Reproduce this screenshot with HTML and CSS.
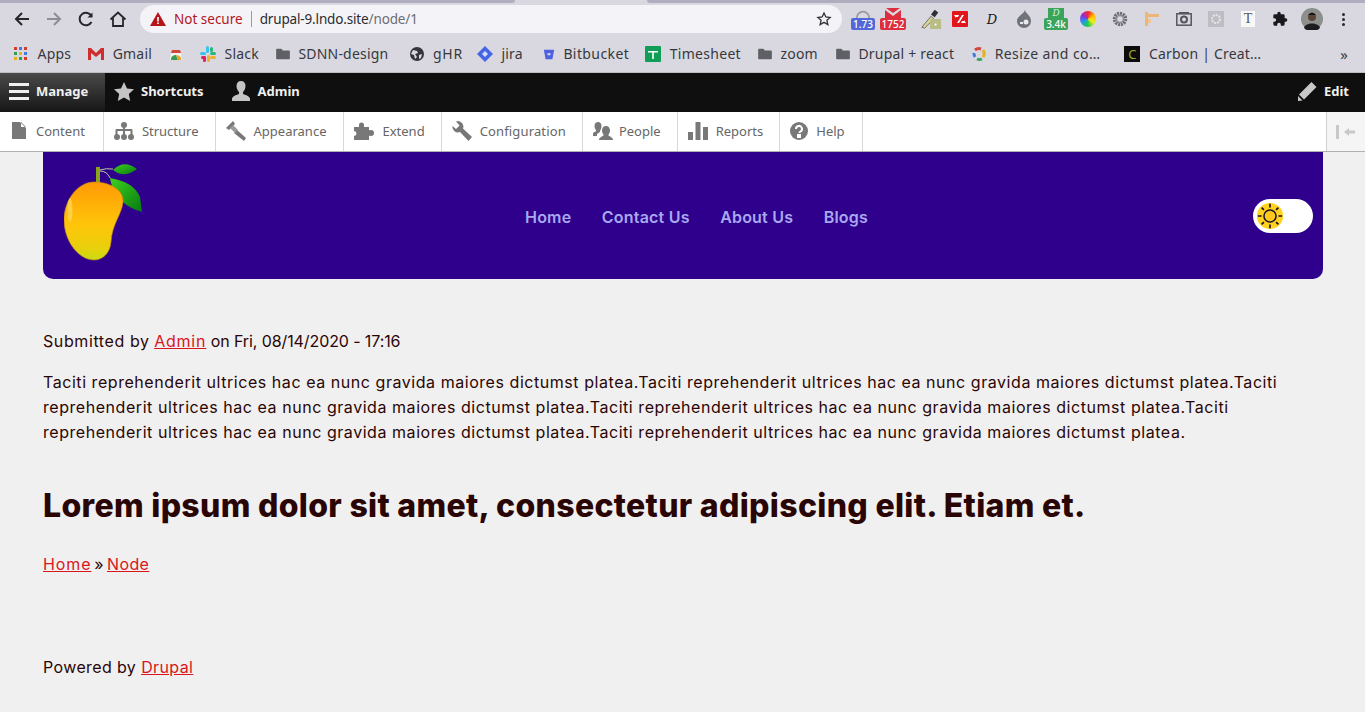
FILE: index.html
```html
<!DOCTYPE html>
<html lang="en">
<head>
    <meta charset="UTF-8">
    <meta name="viewport" content="width=device-width, initial-scale=1.0">
    <title>Drupal 9 node</title>
    <link rel="stylesheet" href="styles.css">
</head>
<body>
    <svg class="defs" width="0" height="0">
        <symbol id="folder" viewBox="0 0 16 14"><path d="M0 2q0-1 1-1h5l2 2h7q1 0 1 1v8q0 1-1 1H1q-1 0-1-1z"/></symbol>
    </svg>

    <div class="tabstrip">
        <span class="tab-edge tab-left"></span>
        <span class="tab-edge tab-right"></span>
    </div>

    <div class="toolbar">
        <div class="nav-icons">
            <svg width="18" height="18" viewBox="0 0 18 18" fill="none" stroke="#26272b" stroke-width="2"><path d="M16 9H3M9 3 3 9l6 6"/></svg>
            <svg width="18" height="18" viewBox="0 0 18 18" fill="none" stroke="#8d8e93" stroke-width="2"><path d="M2 9h13M9 3l6 6-6 6"/></svg>
            <svg width="18" height="18" viewBox="0 0 18 18" fill="none" stroke="#26272b" stroke-width="2"><path d="M14.5 12a6.3 6.3 0 1 1 .2-5.5"/><path d="M15.5 2.500v5h-5" fill="#26272b" stroke="none"/></svg>
            <svg width="18" height="18" viewBox="0 0 18 18" fill="none" stroke="#26272b" stroke-width="1.800"><path d="M1.500 9.500 9 2.500l7.500 7M4 8v8h10V8"/></svg>
        </div>
        <div class="omnibox">
            <svg class="warn" width="16" height="14" viewBox="0 0 16 14"><path d="M8 0 16 14H0z" fill="#b3151b"/><path d="M7.200 5h1.600v4.500H7.200zM7.200 10.500h1.600V12H7.200z" fill="#fff"/></svg>
            <span class="not-secure">Not secure</span>
            <span class="omni-sep"></span>
            <span class="url">drupal-9.lndo.site<span class="url-path">/node/1</span></span>
            <svg class="omni-star" width="16" height="16" viewBox="0 0 24 24" fill="none" stroke="#33343a" stroke-width="2"><path d="m12 3 2.800 6 6.400.7-4.800 4.300 1.400 6.400L12 17l-5.800 3.400L7.600 14 2.800 9.700 9.200 9z"/></svg>
        </div>
        <div class="extensions">
            <span class="ext ext-speed"><svg width="20" height="9" viewBox="0 0 20 10" fill="none" stroke="#9a9aa0" stroke-width="2"><path d="M3 10a7 7 0 0 1 14 0"/></svg><b class="badge badge-blue">1.73</b></span>
            <span class="ext ext-mail"><svg width="18" height="10" viewBox="0 0 18 10"><path d="M2 0h14L9 5z" fill="#dc2e3c"/><path d="M1 2l8 6 8-6v8H1z" fill="#dc2e3c"/></svg><b class="badge badge-red">1752</b></span>
            <svg class="ext-dropper" width="22" height="24" viewBox="0 0 24 24"><path d="M2 21 12 9l3 3L5 22z" fill="#d8d49a" stroke="#666" stroke-width="1"/><path d="m12 7 4-5 4 3-4 5z" fill="#2e2f33"/><rect x="11" y="12" width="12" height="11" rx="1" fill="#b8bd84"/><rect x="16" y="17" width="2" height="2" fill="#fff"/></svg>
            <svg class="ext-icon" width="16" height="16" viewBox="0 0 16 16"><rect width="16" height="16" rx="1" fill="#e2141c"/><path d="M2 4h5l-1 2H4v1zM14 12H9l1-2h2V9zM5 12 10 4h2l-5 8z" fill="#fff"/></svg>
            <span class="ext-d">D</span>
            <svg class="ext-icon" width="16" height="18" viewBox="0 0 16 18"><path d="M9 0c0 3 6 5 6 11a7 7 0 0 1-14 0C1 6 7 5 9 0z" fill="#70727a"/><circle cx="10" cy="12" r="2.500" fill="#e8e8ea"/><rect x="4" y="12" width="3" height="2" fill="#e8e8ea"/></svg>
            <span class="ext ext-green"><span class="green-top">D</span><b class="badge badge-green">3.4k</b></span>
            <span class="ext-wheel"></span>
            <svg class="ext-icon" width="16" height="16" viewBox="0 0 16 16"><circle cx="8" cy="8" r="5.500" fill="none" stroke="#6e6f74" stroke-width="3.500" stroke-dasharray="2 .8"/><circle cx="8" cy="8" r="3.500" fill="none" stroke="#8d8e93" stroke-width="1.500"/></svg>
            <svg class="ext-icon" width="16" height="16" viewBox="0 0 16 16"><path d="M1 1h3v14H1z" fill="#ecb679"/><path d="M4 3h11v3H4z" fill="#ecb679"/><rect x="4" y="8" width="3" height="4" fill="#f0c590"/></svg>
            <svg class="ext-icon" width="16" height="14" viewBox="0 0 16 14"><rect x=".8" y="1.800" width="14.400" height="11.400" fill="none" stroke="#55565b" stroke-width="1.500"/><rect x="3" y="0" width="10" height="2" fill="#55565b"/><circle cx="8" cy="7.500" r="3" fill="none" stroke="#55565b" stroke-width="2"/></svg>
            <svg class="ext-icon" width="16" height="16" viewBox="0 0 16 16"><rect width="16" height="16" fill="#bdbdc3"/><circle cx="8" cy="8" r="4" fill="none" stroke="#e6e6ea" stroke-width="2" stroke-dasharray="2 1"/></svg>
            <span class="ext-t">T</span>
            <svg class="ext-icon" width="16" height="16" viewBox="0 0 24 24"><path fill="#18191c" d="M20.500 11H19V7a2 2 0 0 0-2-2h-4V3.500a2.500 2.500 0 0 0-5 0V5H4a2 2 0 0 0-2 2v3.800h1.500a2.700 2.700 0 0 1 0 5.400H2V20a2 2 0 0 0 2 2h3.800v-1.500a2.700 2.700 0 0 1 5.400 0V22H17a2 2 0 0 0 2-2v-4h1.500a2.500 2.500 0 0 0 0-5z"/></svg>
            <svg class="avatar" width="22" height="22" viewBox="0 0 22 22"><circle cx="11" cy="11" r="11" fill="#8c8f8c"/><path d="M3 20c1-6 15-6 16 0a11 11 0 0 1-16 0z" fill="#1d1d1f"/><circle cx="11" cy="9" r="4" fill="#5c4438"/><path d="M7 7q4-5 8 0z" fill="#17181a"/></svg>
            <span class="kebab"><i></i><i></i><i></i></span>
        </div>
    </div>

    <div class="bookmarks">
        <a class="bm bm-apps"><svg width="14" height="14" viewBox="0 0 14 14"><g fill="#d33b2c"><rect width="3" height="3"/><rect x="5" width="3" height="3" fill="#3d7be0"/><rect x="10" width="3" height="3" fill="#d33b2c"/></g><rect y="5" width="3" height="3" fill="#2f9e53"/><rect x="5" y="5" width="3" height="3" fill="#e3b21c"/><rect x="10" y="5" width="3" height="3" fill="#3d7be0"/><rect y="10" width="3" height="3" fill="#e3b21c"/><rect x="5" y="10" width="3" height="3" fill="#2f9e53"/><rect x="10" y="10" width="3" height="3" fill="#d33b2c"/></svg>Apps</a>
        <a class="bm"><svg width="16" height="12" viewBox="0 0 16 12"><path d="M0 0h3l5 5 5-5h3v12h-3V5L8 9 3 5v7H0z" fill="#cf2f2c"/></svg>Gmail</a>
        <a class="bm bm-icon"><svg width="14" height="16" viewBox="0 0 14 16"><path d="M3 4h8l1 3H2z" fill="#d4453a"/><path d="M2 7h10l1 7H1z" fill="#f2f2f2"/><path d="M2 13a5 4 0 0 1 5-4l2 5H2z" fill="#3a9a55"/><path d="M7 9a5 4 0 0 1 5 5H9z" fill="#e7a52b"/></svg></a>
        <a class="bm"><svg width="16" height="16" viewBox="0 0 16 16"><rect x="6" y="0" width="3" height="7" rx="1.500" fill="#36c5f0"/><rect x="0" y="6" width="6" height="3" rx="1.500" fill="#36c5f0"/><rect x="10" y="1" width="3" height="5" rx="1.500" fill="#2eb67d"/><rect x="10" y="6" width="6" height="3" rx="1.500" fill="#2eb67d"/><rect x="7" y="9" width="3" height="7" rx="1.500" fill="#ecb22e"/><rect x="10" y="10" width="6" height="3" rx="1.500" fill="#ecb22e"/><rect x="1" y="10" width="5" height="3" rx="1.500" fill="#e01e5a"/><rect x="3" y="10" width="3" height="6" rx="1.500" fill="#e01e5a"/></svg>Slack</a>
        <a class="bm"><svg class="folder" width="14" height="12"><use href="#folder"/></svg>SDNN-design</a>
        <a class="bm bm-ghr"><svg width="14" height="14" viewBox="0 0 14 14"><circle cx="7" cy="7" r="7" fill="#34353a"/><path d="M3 3l4 1 1 2-3 1 2 3-2 2-1-4-3-1zM9 8l3-1-1 4-2 1z" fill="#d9d9df"/></svg>gHR</a>
        <a class="bm bm-jira"><svg width="16" height="16" viewBox="0 0 16 16"><path d="M8 0l8 8-8 8-8-8z" fill="#4466e6"/><path d="M8 5l3 3-3 3-3-3z" fill="#d8dcf6"/></svg>jira</a>
        <a class="bm bm-bit"><svg width="12" height="12" viewBox="0 0 14 14"><path d="M1 2h12L11 13H3z" fill="#4e5fe0"/><path d="M5 6h4l-.5 2.500h-3z" fill="#d8dcf6"/></svg>Bitbucket</a>
        <a class="bm bm-time"><svg width="16" height="16" viewBox="0 0 16 16"><rect width="16" height="16" rx="1" fill="#0f9d58"/><path d="M3 5h10v1.500H8.800V13H7.200V6.500H3z" fill="#fff"/></svg>Timesheet</a>
        <a class="bm"><svg class="folder" width="14" height="12"><use href="#folder"/></svg>zoom</a>
        <a class="bm bm-drupal"><svg class="folder" width="14" height="12"><use href="#folder"/></svg>Drupal + react</a>
        <a class="bm bm-resize"><svg width="14" height="16" viewBox="0 0 14 16" fill="none" stroke-width="3"><path d="M3 4a6 6 0 0 1 6-1" stroke="#d7453a"/><path d="M11 4a6 6 0 0 1 0 7" stroke="#e3b21c"/><path d="M10 13a6 6 0 0 1-5 0" stroke="#3aa45a"/><path d="M3 11a6 6 0 0 1-1-4" stroke="#3a7be0"/></svg>Resize and co…</a>
        <a class="bm bm-carbon"><span class="carbon">C</span>Carbon | Creat…</a>
        <span class="more">»</span>
    </div>

    <div class="admin-bar">
        <a class="admin-item manage"><span class="burger"><i></i><i></i><i></i></span>Manage</a>
        <a class="admin-item shortcuts"><svg width="20" height="19" viewBox="0 0 20 19"><path d="m10 0 3 6.500 7 .8-5.200 4.700 1.400 7L10 15.500 3.800 19l1.400-7L0 7.300l7-.8z" fill="#c4c4c4"/></svg>Shortcuts</a>
        <a class="admin-item"><svg width="20" height="20" viewBox="0 0 20 20"><path d="M10 0c3 0 4.500 2 4.500 5s-1.500 5-2.500 6v2c2 1 6 1.500 7 4.500V20H1v-2.500C2 14.500 6 14 8 13v-2C7 10 5.500 8 5.500 5S7 0 10 0z" fill="#c4c4c4"/></svg>Admin</a>
        <a class="admin-item admin-edit"><svg width="19" height="19" viewBox="0 0 19 19"><path d="m13.500 0 5 5L6 17.500l-5-5zM0 14l4.500 4.500L0 19z" fill="#c8c8c8"/></svg>Edit</a>
    </div>

    <div class="tray">
        <a class="tray-item tray-first"><svg width="14" height="17" viewBox="0 0 14 17"><path d="M0 0h8l6 6v11H0zM9 0v5h5z" fill="#787878"/></svg>Content</a>
        <a class="tray-item"><svg width="20" height="18" viewBox="0 0 20 18"><g fill="#787878"><circle cx="10" cy="3" r="3"/><circle cx="3" cy="15" r="3"/><circle cx="10" cy="15" r="3"/><circle cx="17" cy="15" r="3"/><path d="M9 4h2v3h6.500q1 0 1 1v5h-2V9H11v4H9V9H3.500v4h-2V8q0-1 1-1H9z"/></g></svg>Structure</a>
        <a class="tray-item tray-appearance"><svg width="20" height="20" viewBox="0 0 20 20"><g fill="#787878"><path d="M7 0 0 7l3 2 6-6z"/><path d="m8 12 3-3 9 8-2 3z"/><path d="m6 5 1-1 5 5-3 3-5-5z" fill="#9a9a9a"/></g></svg>Appearance</a>
        <a class="tray-item"><svg width="20" height="18" viewBox="0 0 20 18"><path d="M0 5h5V3a2.500 2.500 0 0 1 5 0v2h5v3.500a2.500 2.500 0 0 1 0 5V18H0v-4a2.500 2.500 0 0 0 0-5z" fill="#787878"/><circle cx="17" cy="11" r="3" fill="#787878"/></svg>Extend</a>
        <a class="tray-item tray-config"><svg width="20" height="20" viewBox="0 0 20 20"><path d="M6 0a5.500 5.500 0 0 1 5 7.500l9 8.500-3.500 4L8 11a5.500 5.500 0 0 1-7.500-6l3.500 3 3.500-3.500L4 .5Q5 0 6 0z" fill="#787878"/></svg>Configuration</a>
        <a class="tray-item tray-people"><svg width="20" height="18" viewBox="0 0 20 18"><path d="M5 0c2 0 3.500 1.500 3.500 4S7.500 8 7 9v1l-3 2v2H0v-2c0-2 3-2.500 3-3V8C2 7 1.500 5.500 1.500 4 1.500 1.500 3 0 5 0z" fill="#787878"/><path d="M13 4c2.500 0 4 2 4 4.500 0 2-1 3.500-1.500 4v1c1 1 4 1.500 4.500 4V18H6v-.500c.5-2.500 3.500-3 4.500-4v-1c-.5-.5-1.500-2-1.500-4C9 6 10.500 4 13 4z" fill="#787878"/></svg>People</a>
        <a class="tray-item"><svg width="20" height="18" viewBox="0 0 20 18"><path d="M0 10h5v8H0zM7.500 0h5v18h-5zM15 5h5v13h-5z" fill="#787878"/></svg>Reports</a>
        <a class="tray-item tray-help"><svg width="18" height="18" viewBox="0 0 18 18"><circle cx="9" cy="9" r="9" fill="#787878"/><path d="M6 7a3 3 0 1 1 4.500 2.500c-.8.5-1 .8-1 1.500M8 13h2v2H8z" fill="none" stroke="#fff" stroke-width="2"/></svg>Help</a>
        <span class="tray-toggle"><svg width="20" height="14" viewBox="0 0 20 14"><rect x="0" y="0" width="3" height="14" fill="#c8c8c8"/><path d="M8 7l5-4v2.500h6v3h-6V11z" fill="#c8c8c8"/></svg></span>
    </div>

    <div class="page">
        <header class="site-header">
            <svg class="logo" width="80" height="100" viewBox="0 0 80 100">
                <defs>
                    <linearGradient id="mango" x1="0" y1="0" x2="0" y2="1">
                        <stop offset="0" stop-color="#ff9a05"/>
                        <stop offset=".55" stop-color="#ffc50a"/>
                        <stop offset=".85" stop-color="#e8d00c"/>
                        <stop offset="1" stop-color="#c8dc12"/>
                    </linearGradient>
                    <linearGradient id="leaf" x1="0" y1="0" x2="1" y2="1">
                        <stop offset="0" stop-color="#3fd01e"/>
                        <stop offset="1" stop-color="#057a10"/>
                    </linearGradient>
                </defs>
                <path d="M32 5h4v16h-4z" fill="#8aa51c"/>
                <path d="M36 8q6-2 13-1M36 9q7 0 10 7" stroke="#b9c7a0" stroke-width="1" fill="none"/>
                <path d="M49 8Q60-3 73 7 60 17 49 8z" fill="url(#leaf)"/>
                <path d="M46 16Q70 20 76 35L78 50Q60 45 52 32 47 24 46 16z" fill="url(#leaf)"/>
                <path d="M30 20C46 20 60 28 59 40 58 52 48 62 47 80 46 92 38 98 30 98 14 98 0 78 0 58 0 38 14 20 30 20z" fill="url(#mango)" stroke="#c9851a" stroke-width=".6"/>
                <ellipse cx="6" cy="48" rx="2.500" ry="12" fill="#ffe070" opacity=".6"/>
            </svg>
            <nav class="main-nav">
                <a>Home</a>
                <a>Contact Us</a>
                <a>About Us</a>
                <a>Blogs</a>
            </nav>
            <span class="theme-toggle">
                <svg width="28" height="28" viewBox="0 0 30 30">
                    <circle cx="15" cy="15" r="14" fill="#ffd21c"/>
                    <circle cx="15" cy="15" r="6.500" fill="#fdc91a" stroke="#1a1233" stroke-width="1.600"/>
                    <path d="M15 2v4M15 24v4M2 15h4M24 15h4M6 6l2.500 2.500M21.500 21.500 24 24M6 24l2.500-2.500M21.500 8.500 24 6" stroke="#1a1233" stroke-width="1.800"/>
                </svg>
            </span>
        </header>

        <main class="content">
            <p class="submitted"><span class="by">Submitted by</span> <a href="#">Admin</a> <span class="date">on Fri, 08/14/2020 - 17:16</span></p>
            <p class="body-text">Taciti reprehenderit ultrices hac ea nunc gravida maiores dictumst platea.Taciti reprehenderit ultrices hac ea nunc gravida maiores dictumst platea.Taciti reprehenderit ultrices hac ea nunc gravida maiores dictumst platea.Taciti reprehenderit ultrices hac ea nunc gravida maiores dictumst platea.Taciti reprehenderit ultrices hac ea nunc gravida maiores dictumst platea.Taciti reprehenderit ultrices hac ea nunc gravida maiores dictumst platea.</p>
            <h1>Lorem ipsum dolor sit amet, consectetur adipiscing elit. Etiam et.</h1>
            <p class="crumbs"><a href="#">Home</a> » <a href="#">Node</a></p>
            <p class="powered">Powered by <a href="#">Drupal</a></p>
        </main>
    </div>
</body>
</html>
```

FILE: styles.css
```css
html, body {
    margin: 0;
    padding: 0;
}
body {
    background: #f0f0f0;
    font-family: "Inter", "Liberation Sans", sans-serif;
    color: #2a0505;
    height: 712px;
    overflow: hidden;
}
svg {
    display: block;
    flex: none;
}
.defs {
    position: absolute;
}

/* browser chrome */
.tabstrip {
    height: 3px;
    background: #d9d8e0;
    position: relative;
}
.tab-edge {
    position: absolute;
    top: 0;
    height: 3px;
    background: #aeaebe;
}
.tab-left {
    left: 0;
    width: 515px;
    border-radius: 0 0 6px 0;
}
.tab-right {
    left: 647px;
    right: 0;
    border-radius: 0 0 0 6px;
}
.toolbar {
    height: 32px;
    background: #d9d8e0;
    display: flex;
    align-items: center;
}
.nav-icons {
    display: flex;
    gap: 14px;
    padding-left: 13px;
    width: 127px;
    box-sizing: border-box;
}
.omnibox {
    width: 702px;
    height: 28px;
    margin-left: 13px;
    background: #f4f4f8;
    border-radius: 14px;
    display: flex;
    align-items: center;
    font-family: "Noto Sans", sans-serif;
    font-size: 13.5px;
    box-sizing: border-box;
    padding: 0 10px;
}
.warn {
    margin-right: 8px;
}
.not-secure {
    color: #b3151b;
}
.omni-sep {
    width: 1px;
    height: 16px;
    background: #9a9aa0;
    margin: 0 8px;
}
.url {
    color: #2a2b30;
    letter-spacing: -0.15px;
}
.url-path {
    color: #6b6c72;
}
.omni-star {
    margin-left: auto;
}
.extensions {
    display: flex;
    align-items: center;
    margin-left: 6px;
    flex: 1;
    height: 32px;
}
.ext {
    width: 30px;
    display: flex;
    flex-direction: column;
    align-items: center;
}
.ext-green {
    width: 32px;
}
.badge {
    font-family: "Noto Sans", sans-serif;
    font-size: 10px;
    line-height: 12px;
    color: #fff;
    border-radius: 2px;
    padding: 0 2px;
    font-weight: 500;
}
.badge-blue { background: #5068d8; }
.badge-red { background: #dc2e3c; }
.badge-green { background: #3aa45a; }
.ext-icon {
    margin: 0 8px;
}
.ext-dropper {
    margin: 0 2px 0 12px;
}
.ext-d {
    width: 32px;
    text-align: center;
    font-family: "DejaVu Serif", serif;
    font-style: italic;
    font-size: 13px;
    color: #18191c;
}
.green-top {
    background: #3aa45a;
    color: #d9f0dd;
    font-size: 9px;
    line-height: 10px;
    width: 16px;
    text-align: center;
    font-family: "DejaVu Serif", serif;
    font-style: italic;
}
.ext-wheel {
    width: 16px;
    height: 16px;
    margin: 0 8px;
    border-radius: 50%;
    background: conic-gradient(#f23 0, #fb0 60deg, #ee2 120deg, #2c4 180deg, #29e 240deg, #83d 300deg, #f23 360deg);
}
.ext-t {
    width: 14px;
    height: 16px;
    margin: 0 9px;
    background: #f8f8f8;
    color: #55565b;
    font-family: "Liberation Serif", serif;
    font-size: 14px;
    line-height: 16px;
    text-align: center;
}
.avatar {
    margin-left: 5px;
}
.kebab {
    display: flex;
    flex-direction: column;
    gap: 2px;
    margin-left: 19px;
}
.kebab i {
    width: 3px;
    height: 3px;
    border-radius: 50%;
    background: #2a2b30;
}
.bookmarks {
    height: 38px;
    background: #d9d8e0;
    display: flex;
    align-items: center;
    gap: 17px;
    padding: 0 14px;
    box-sizing: border-box;
    font-family: "Noto Sans", sans-serif;
    font-size: 14px;
    letter-spacing: 0.2px;
    color: #37383d;
    border-bottom: 1px solid #bcbcc2;
}
.bm {
    display: flex;
    align-items: center;
    gap: 8.5px;
    white-space: nowrap;
}
.bm-apps svg {
    margin-right: 1px;
}
.bm-ghr {
    margin-left: 5px;
    letter-spacing: 0.8px;
}
.bm-jira {
    margin-left: -3px;
}
.bm-bit {
    margin-left: 3px;
    letter-spacing: 0.4px;
}
.bm-time {
    margin-left: -1px;
    letter-spacing: 0.3px;
}
.bm-drupal {
    margin-left: 1px;
}
.bm-resize {
    margin-left: 1px;
    letter-spacing: 0.4px;
}
.bm-carbon {
    margin-left: 7px;
}
.folder {
    fill: #5f6066;
}
.carbon {
    width: 16px;
    height: 16px;
    background: #0c0c0c;
    color: #9aad2a;
    font-size: 13px;
    line-height: 16px;
    text-align: center;
}
.more {
    margin-left: auto;
    font-size: 15px;
    padding-right: 3px;
}

/* drupal admin toolbar */
.admin-bar {
    height: 39px;
    background: #0f0f0f;
    display: flex;
    align-items: center;
    font-family: "Noto Sans", sans-serif;
    font-size: 13px;
    font-weight: 700;
    color: #f0f0f0;
}
.admin-item {
    display: flex;
    align-items: center;
    gap: 7px;
    padding: 0 9px 3px;
    height: 100%;
    box-sizing: border-box;
}
.manage {
    width: 105px;
    background: linear-gradient(#4a4a4a, #161616);
}
.shortcuts {
    margin-right: 9px;
}
.burger {
    display: flex;
    flex-direction: column;
    gap: 4px;
}
.burger i {
    width: 20px;
    height: 3px;
    background: #f0f0f0;
}
.admin-edit {
    margin-left: auto;
    padding-right: 16px;
}
.tray {
    height: 40px;
    box-sizing: border-box;
    background: #fff;
    display: flex;
    font-family: "Noto Sans", sans-serif;
    font-size: 13px;
    color: #666;
    border-bottom: 1px solid #b0b0b0;
}
.tray-item {
    display: flex;
    align-items: center;
    gap: 8px;
    padding: 0 16px 2px 10px;
    border-right: 1px solid #d8d8d8;
}
.tray-first {
    padding-left: 12px;
    padding-right: 18px;
    gap: 10px;
}
.tray-appearance {
    padding-right: 17px;
}
.tray-config {
    letter-spacing: 0.15px;
}
.tray-people {
    gap: 6px;
}
.tray-help {
    padding-right: 17px;
}
.tray-toggle {
    margin-left: auto;
    width: 38px;
    border-left: 1px solid #d0d0d0;
    background: #f5f5f5;
    display: flex;
    align-items: center;
    justify-content: center;
}

/* page */
.page {
    padding: 0 42px 0 43px;
}
.site-header {
    height: 127px;
    background: #2e008b;
    border-radius: 0 0 10px 10px;
    display: flex;
    align-items: center;
    padding: 0 10px 0 21px;
}
.logo {
    margin-top: -7px;
}
.main-nav {
    display: flex;
    gap: 30.5px;
    margin-left: 381px;
    font-size: 16px;
    font-weight: 600;
    letter-spacing: 0.2px;
    color: #a8a8f0;
    margin-top: 3px;
}
.theme-toggle {
    margin-left: auto;
    width: 60px;
    height: 34px;
    background: #fff;
    border-radius: 17px;
    margin-top: 1px;
    display: flex;
    align-items: center;
    padding-left: 3px;
    box-sizing: border-box;
}
.content {
    font-size: 16px;
    line-height: 25px;
    padding-top: 50px;
}
.content p {
    margin: 0;
}
.content a {
    color: #d9161c;
    text-decoration: underline;
}
.content .submitted {
    margin-bottom: 16px;
}
.by {
    letter-spacing: 0.6px;
}
.content .submitted a {
    letter-spacing: 0.78px;
}
.date {
    letter-spacing: -0.1px;
}
.body-text {
    letter-spacing: 0.55px;
}
h1 {
    font-size: 32px;
    font-weight: 800;
    letter-spacing: 0.32px;
    line-height: 40px;
    margin: 41px 0 26px;
}
.crumbs {
    letter-spacing: 0.4px;
    word-spacing: -2px;
}
.content .crumbs a:first-child {
    letter-spacing: 0.9px;
}
.content .powered {
    margin-top: 78px;
    letter-spacing: 0.38px;
}
```
